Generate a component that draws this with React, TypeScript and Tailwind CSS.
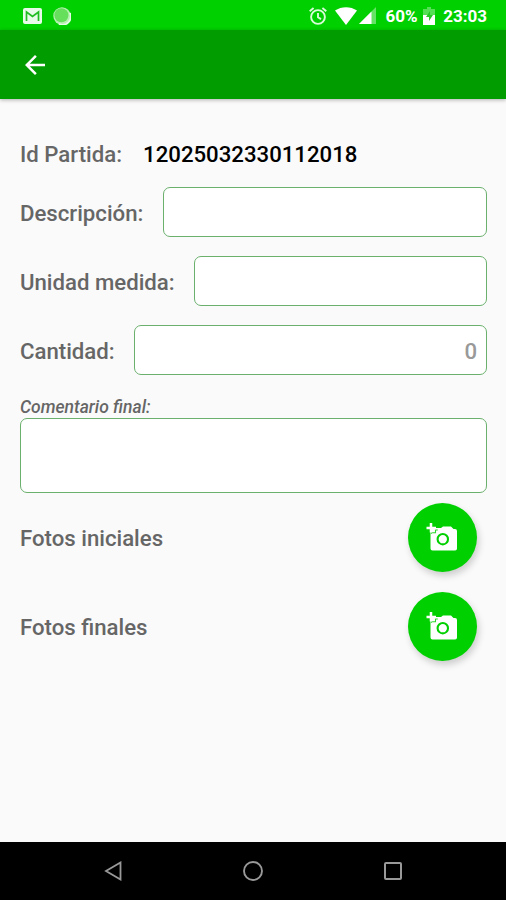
import { useState } from 'react'
import type { ChangeEvent } from 'react'
import { MdArrowBack } from 'react-icons/md'

type FieldProps = {
  label: string
  placeholder?: string
}

function Field({ label, placeholder }: FieldProps) {
  const [value, setValue] = useState('')

  function onChange(e: ChangeEvent<HTMLInputElement>) {
    setValue(e.target.value)
  }

  return (
    <label className="flex h-[50px] items-center gap-[19.5px]">
      <span className="shrink-0 pt-[2px] whitespace-nowrap">{label}</span>
      <input
        value={value}
        onChange={onChange}
        placeholder={placeholder}
        className="h-[50px] w-full min-w-0 rounded-[7px] border-[1.5px] border-[#6bb06d] bg-white px-[9px] pt-[2px] text-right font-medium text-black outline-none placeholder:text-[#999]"
      />
    </label>
  )
}

function AddPhotoIcon() {
  return (
    <svg className="mr-[2px] mb-[2px] h-[28px] w-[31px]" viewBox="0 0 31 28">
      <path
        d="M7 5h8l2-1.500h8L27.500 6H29a2 2 0 0 1 2 2v17.500a2 2 0 0 1-2 2H6.500a2 2 0 0 1-2-2V8Z"
        fill="#fff"
      />
      <path d="M5.500 10.800v-1h4V7h2.300" fill="none" stroke="#2bd62b" strokeWidth="1.100" />
      <path d="M5 0v9.500M.5 5h9.500" stroke="#fff" strokeWidth="2.500" />
      <circle cx="16.800" cy="16.200" r="5.200" fill="none" stroke="#00d000" strokeWidth="2.100" />
    </svg>
  )
}

function PhotoRow({ label }: { label: string }) {
  return (
    <div className="flex h-[69px] items-center justify-between pr-[10px]">
      <span>{label}</span>
      <button
        type="button"
        aria-label={label}
        className="flex size-[69px] items-center justify-center rounded-full bg-[#00d000] text-white shadow-[2px_4px_7px_rgba(0,0,0,0.18)]"
      >
        <AddPhotoIcon />
      </button>
    </div>
  )
}

function StatusBar() {
  return (
    <div className="flex h-[30px] items-center bg-[#00d000] pt-[1px] pr-[19px] pl-[23px] text-[17px] font-bold text-white">
      <svg className="h-[16px] w-[19px]" viewBox="0 0 19 16">
        <rect width="19" height="16" rx="2" fill="#e9fbe9" />
        <path d="M3.500 13V4l6 4.500 6-4.500v9" fill="none" stroke="#22bd22" strokeWidth="1.700" />
      </svg>
      <svg className="ml-[11px] size-[18px]" viewBox="0 0 18 18">
        <circle cx="9" cy="9" r="8.700" fill="#b5f0b0" />
        <path d="M17 6a8.300 8.300 0 0 1-11 11" fill="none" stroke="#e6fbe6" strokeWidth="1.800" />
        <circle cx="8.400" cy="8.300" r="7" fill="#66df5c" />
      </svg>
      <svg className="ml-auto size-[18px]" viewBox="0 0 18 18" fill="none" stroke="#d8fbd8" strokeWidth="1.900">
        <circle cx="9" cy="10" r="6.900" />
        <path d="M9 6v4.300l3 1.800M.7 4.300 4.600 1M13.400 1l3.900 3.300" />
      </svg>
      <svg className="ml-[8px] h-[18px] w-[22px]" viewBox="0 0 22 18" fill="#fff">
        <path d="M0 3.500C6.500-1 15.500-1 22 3.500L11 18Z" />
      </svg>
      <svg className="ml-[2px] size-[17px]" viewBox="0 0 17 17">
        <path d="M17 0v17H0Z" fill="#66e366" />
        <path d="M12.500 4.500V17H0Z" fill="#fff" />
      </svg>
      <span className="ml-[10px]">60%</span>
      <svg className="ml-[5px] h-[18px] w-[12px]" viewBox="0 0 12 18">
        <path d="M4 0h4v2h4v16H0V2h4Z" fill="#55df55" />
        <path d="M0 8h12v10H0Z" fill="#fff" />
        <path d="M7 4 3 10h3v4l4-6H7Z" fill="#25c825" />
      </svg>
      <span className="ml-[8.500px]">23:03</span>
    </div>
  )
}

function NavBar() {
  return (
    <div className="flex h-[58px] items-center justify-between bg-black pr-[103px] pl-[103px]">
      <svg className="size-[20px]" viewBox="0 0 20 20" fill="none" stroke="#999" strokeWidth="1.800">
        <path d="M17.500 1.500v17L3 10Z" />
      </svg>
      <svg className="size-[20px]" viewBox="0 0 20 20" fill="none" stroke="#999" strokeWidth="1.900">
        <circle cx="10" cy="10" r="9" />
      </svg>
      <svg className="size-[20px]" viewBox="0 0 20 20" fill="none" stroke="#999" strokeWidth="2">
        <rect x="2" y="2" width="16" height="16" rx="1" />
      </svg>
    </div>
  )
}

export default function App() {
  const [comment, setComment] = useState('')

  return (
    <div className="flex h-[900px] w-[506px] flex-col bg-[#fafafa] font-[Roboto,sans-serif] text-[22.2px] leading-[26px] font-medium text-[#666]">
      <StatusBar />
      <header className="flex h-[68.5px] items-center bg-[#009c00] pl-[20px] text-white shadow-[0_1px_4px_rgba(0,0,0,0.3)]">
        <button type="button" aria-label="Volver" className="pt-px">
          <MdArrowBack className="size-[30px]" />
        </button>
      </header>

      <main className="flex grow flex-col pt-[42.5px] pr-[19px] pl-[20px]">
        <div className="flex gap-[21px]">
          <span>Id Partida:</span>
          <span className="text-black">12025032330112018</span>
        </div>

        <div className="mt-[20px] flex flex-col gap-[19px]">
          <Field label="Descripción:" />
          <Field label="Unidad medida:" />
          <Field label="Cantidad:" placeholder="0" />
        </div>

        <label className="mt-[22px] flex flex-col">
          <span className="text-[17.5px] leading-[21px] italic">Comentario final:</span>
          <textarea
            value={comment}
            onChange={(e) => setComment(e.target.value)}
            className="h-[75px] resize-none rounded-[7px] border-[1.5px] border-[#6bb06d] bg-white p-2 text-black outline-none"
          />
        </label>

        <div className="mt-[10px] flex flex-col gap-[20px]">
          <PhotoRow label="Fotos iniciales" />
          <PhotoRow label="Fotos finales" />
        </div>
      </main>

      <NavBar />
    </div>
  )
}
